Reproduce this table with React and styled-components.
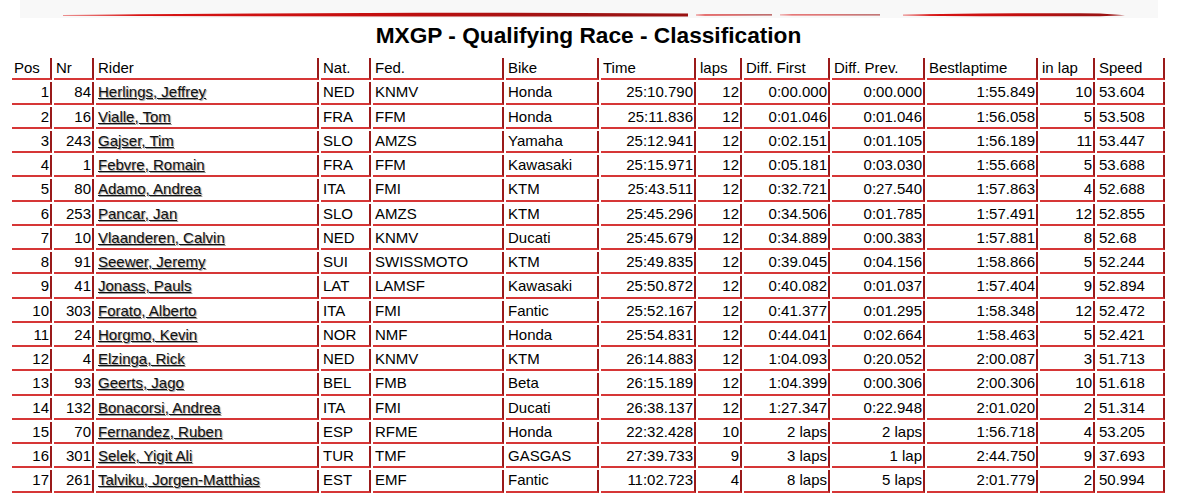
import React from "react";
import styled, { createGlobalStyle } from "styled-components";

const Global = createGlobalStyle`
  html, body { margin: 0; padding: 0; background: #fff; }
  body { font-family: "Liberation Sans", Arial, sans-serif; color: #000; }
`;

const Page = styled.div`
  width: 1177px;
  display: flex;
  flex-direction: column;
  align-items: center;
`;

const Banner = styled.div`
  width: 1138px;
  height: 18px;
  background: #f8f8f8;
  display: flex;
`;

const Title = styled.h1`
  margin: 0 0 4px;
  font-size: 22.7px;
  line-height: 34px;
  font-weight: bold;
  text-align: center;
`;

const Table = styled.table`
  border-collapse: separate;
  border-spacing: 2px;
  table-layout: fixed;
  width: 1157px;
  font-size: 15px;
`;

const Cell = styled.td`
  box-sizing: border-box;
  padding: 1px 1px 2px 2px;
  line-height: 17.25px;
  white-space: nowrap;
  overflow: hidden;
  border-right: 2px solid #9a1a1a;
  border-bottom: 2px solid #d63636;
  text-align: ${(p) => (p.$right ? "right" : "left")};
`;

const Head = styled(Cell).attrs({ as: "th" })`
  font-weight: normal;
  text-align: left;
`;

const RiderLink = styled.a`
  color: #111;
  text-decoration: underline;
  text-shadow: 1px 1px 1px #9a9a9a;
`;

const columns = [
  { label: "Pos", w: 40, right: true },
  { label: "Nr", w: 40, right: true },
  { label: "Rider", w: 223 },
  { label: "Nat.", w: 50 },
  { label: "Fed.", w: 131 },
  { label: "Bike", w: 93 },
  { label: "Time", w: 95, right: true },
  { label: "laps", w: 44, right: true },
  { label: "Diff. First", w: 86, right: true },
  { label: "Diff. Prev.", w: 93, right: true },
  { label: "Bestlaptime", w: 111, right: true },
  { label: "in lap", w: 55, right: true },
  { label: "Speed", w: 68 },
];

const rows = [
  ["1", "84", "Herlings, Jeffrey", "NED", "KNMV", "Honda", "25:10.790", "12", "0:00.000", "0:00.000", "1:55.849", "10", "53.604"],
  ["2", "16", "Vialle, Tom", "FRA", "FFM", "Honda", "25:11.836", "12", "0:01.046", "0:01.046", "1:56.058", "5", "53.508"],
  ["3", "243", "Gajser, Tim", "SLO", "AMZS", "Yamaha", "25:12.941", "12", "0:02.151", "0:01.105", "1:56.189", "11", "53.447"],
  ["4", "1", "Febvre, Romain", "FRA", "FFM", "Kawasaki", "25:15.971", "12", "0:05.181", "0:03.030", "1:55.668", "5", "53.688"],
  ["5", "80", "Adamo, Andrea", "ITA", "FMI", "KTM", "25:43.511", "12", "0:32.721", "0:27.540", "1:57.863", "4", "52.688"],
  ["6", "253", "Pancar, Jan", "SLO", "AMZS", "KTM", "25:45.296", "12", "0:34.506", "0:01.785", "1:57.491", "12", "52.855"],
  ["7", "10", "Vlaanderen, Calvin", "NED", "KNMV", "Ducati", "25:45.679", "12", "0:34.889", "0:00.383", "1:57.881", "8", "52.68"],
  ["8", "91", "Seewer, Jeremy", "SUI", "SWISSMOTO", "KTM", "25:49.835", "12", "0:39.045", "0:04.156", "1:58.866", "5", "52.244"],
  ["9", "41", "Jonass, Pauls", "LAT", "LAMSF", "Kawasaki", "25:50.872", "12", "0:40.082", "0:01.037", "1:57.404", "9", "52.894"],
  ["10", "303", "Forato, Alberto", "ITA", "FMI", "Fantic", "25:52.167", "12", "0:41.377", "0:01.295", "1:58.348", "12", "52.472"],
  ["11", "24", "Horgmo, Kevin", "NOR", "NMF", "Honda", "25:54.831", "12", "0:44.041", "0:02.664", "1:58.463", "5", "52.421"],
  ["12", "4", "Elzinga, Rick", "NED", "KNMV", "KTM", "26:14.883", "12", "1:04.093", "0:20.052", "2:00.087", "3", "51.713"],
  ["13", "93", "Geerts, Jago", "BEL", "FMB", "Beta", "26:15.189", "12", "1:04.399", "0:00.306", "2:00.306", "10", "51.618"],
  ["14", "132", "Bonacorsi, Andrea", "ITA", "FMI", "Ducati", "26:38.137", "12", "1:27.347", "0:22.948", "2:01.020", "2", "51.314"],
  ["15", "70", "Fernandez, Ruben", "ESP", "RFME", "Honda", "22:32.428", "10", "2 laps", "2 laps", "1:56.718", "4", "53.205"],
  ["16", "301", "Selek, Yigit Ali", "TUR", "TMF", "GASGAS", "27:39.733", "9", "3 laps", "1 lap", "2:44.750", "9", "37.693"],
  ["17", "261", "Talviku, Jorgen-Matthias", "EST", "EMF", "Fantic", "11:02.723", "4", "8 laps", "5 laps", "2:01.779", "2", "50.994"],
];

function BrushStroke() {
  return (
    <svg width="1138" height="18" viewBox="0 0 1138 18">
      <defs>
        <linearGradient id="brush" x1="0" y1="0" x2="1" y2="0">
          <stop offset="0" stopColor="#e23a3a" stopOpacity="0.55" />
          <stop offset="0.12" stopColor="#d81414" />
          <stop offset="0.5" stopColor="#c40f0f" />
          <stop offset="0.8" stopColor="#a01414" />
          <stop offset="1" stopColor="#9a1212" />
        </linearGradient>
      </defs>
      <g fill="url(#brush)">
        <polygon points="43,15 120,14.2 240,13.4 400,12.8 560,12.9 668,13.6 668,16.4 560,16.6 400,16.5 240,16.2 120,15.9 43,16" />
        <polygon points="676,14.2 752,14.3 752,15.6 676,15.7" opacity="0.8" />
        <polygon points="760,14.3 860,14.2 860,15.4 760,15.6" opacity="0.75" />
        <polygon points="883,14.4 960,13.4 1060,13.2 1080,13.6 1105,15.2 1080,16.2 960,16.3 883,15.8" />
      </g>
    </svg>
  );
}

export default function App() {
  return (
    <Page>
      <Global />
      <Banner>
        <BrushStroke />
      </Banner>
      <Title>MXGP - Qualifying Race - Classification</Title>
      <Table>
        <colgroup>
          {columns.map((c) => (
            <col key={c.label} style={{ width: c.w }} />
          ))}
        </colgroup>
        <thead>
          <tr>
            {columns.map((c) => (
              <Head key={c.label}>{c.label}</Head>
            ))}
          </tr>
        </thead>
        <tbody>
          {rows.map((r) => (
            <tr key={r[0]}>
              {r.map((v, i) => (
                <Cell key={i} $right={columns[i].right}>
                  {i === 2 ? <RiderLink href="#">{v}</RiderLink> : v}
                </Cell>
              ))}
            </tr>
          ))}
        </tbody>
      </Table>
    </Page>
  );
}
